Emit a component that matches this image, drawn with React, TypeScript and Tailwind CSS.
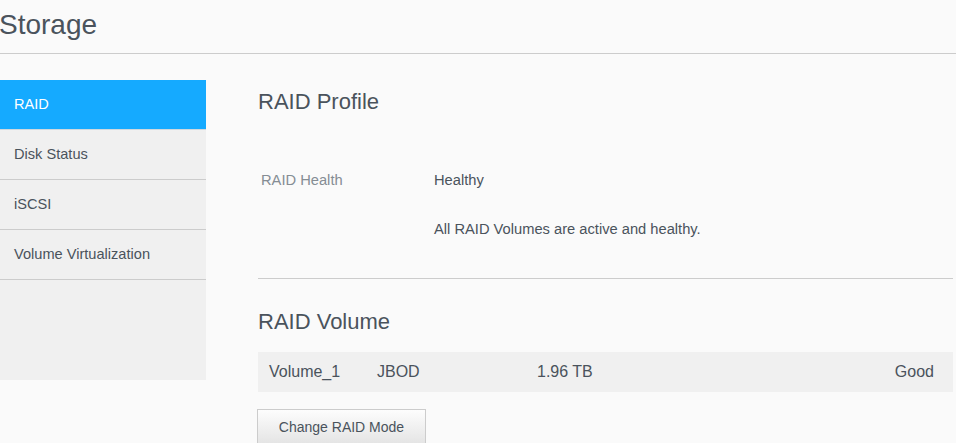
const navItems = ["RAID", "Disk Status", "iSCSI", "Volume Virtualization"];

export default function App() {
  const active = "RAID";

  return (
    <div className="min-h-[443px] w-[956px] overflow-hidden bg-[#fafafa] text-[#4a535c] font-['Liberation_Sans',Arial,sans-serif]">
      {/* Header */}
      <div className="h-[54px] border-b border-[#cccccc]">
        <h1 className="text-[28px] leading-[50px] -ml-[1px]">Storage</h1>
      </div>

      <div className="flex pt-[26px]">
        {/* Sidebar */}
        <div className="w-[206px] h-[300px] bg-[#f0f0f0] shrink-0">
          {navItems.map((name) => (
            <div
              key={name}
              className={
                name === active
                  ? "h-[50px] flex items-center pl-[14px] text-[14.6px] text-white bg-[#15aaff] border-b border-[#cfd8de]"
                  : "h-[50px] flex items-center pl-[14px] text-[14.6px] border-b border-[#cccccc]"
              }
            >
              {name}
            </div>
          ))}
        </div>

        {/* Content */}
        <div className="ml-[52px] w-[695px]">
          <h2 className="text-[22px] leading-[44px]">RAID Profile</h2>

          <div className="mt-[46px] flex text-[14.7px] leading-[20px]">
            <div className="w-[176px] pl-[3px] text-[#858d94]">RAID Health</div>
            <div>Healthy</div>
          </div>
          <div className="mt-[29px] pl-[176px] text-[14.7px] leading-[20px]">
            All RAID Volumes are active and healthy.
          </div>

          <div className="mt-[39px] border-t border-[#cccccc]" />

          <h2 className="mt-[21px] text-[22px] leading-[44px]">RAID Volume</h2>

          <div className="mt-[8px] h-[40px] bg-[#f0f0f0] flex items-center text-[16px] pl-[11px] pr-[19px]">
            <div className="w-[108px]">Volume_1</div>
            <div className="w-[160px]">JBOD</div>
            <div className="flex-1">1.96 TB</div>
            <div>Good</div>
          </div>

          <button
            type="button"
            className="mt-[17px] -ml-[1px] w-[169px] h-[36px] border border-[#cccccc] bg-gradient-to-b from-[#fdfdfd] to-[#e4e4e4] text-[14px] text-[#4a535c]"
          >
            Change RAID Mode
          </button>
        </div>
      </div>
    </div>
  );
}
